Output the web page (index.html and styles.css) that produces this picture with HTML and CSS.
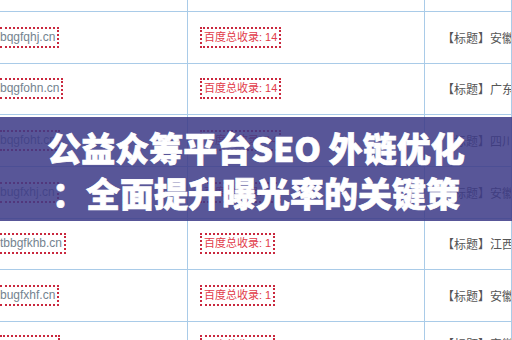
FILE: index.html
```html
<!DOCTYPE html>
<html lang="zh-CN">
<head>
<meta charset="utf-8">
<title>公益众筹平台SEO 外链优化</title>
<link rel="stylesheet" href="styles.css">
</head>
<body>
<div class="sheet">
  <div class="cell"></div><div class="cell"></div><div class="cell"></div>

  <div class="cell c1"><span class="dom">bqgfqhj.cn</span></div>
  <div class="cell c2"><span class="rec">百度总收录: 14</span></div>
  <div class="cell c3">【标题】安徽新能源汽车配件有限公司</div>

  <div class="cell c1"><span class="dom">bqgfohn.cn</span></div>
  <div class="cell c2"><span class="rec">百度总收录: 14</span></div>
  <div class="cell c3">【标题】广东汽车零部件有限公司</div>

  <div class="cell c1"><span class="dom">bqgfoht.cn</span></div>
  <div class="cell c2"><span class="rec">百度总收录: 14</span></div>
  <div class="cell c3">【标题】四川天府科技有限公司</div>

  <div class="cell c1"><span class="dom">bugfxhj.cn</span></div>
  <div class="cell c2"><span class="rec">百度总收录: 14</span></div>
  <div class="cell c3">【标题】安徽服饰贸易有限公司</div>

  <div class="cell c1"><span class="dom">tbbgfkhb.cn</span></div>
  <div class="cell c2"><span class="rec">百度总收录: 1</span></div>
  <div class="cell c3">【标题】江西铁路设备有限公司</div>

  <div class="cell c1"><span class="dom">bugfxhf.cn</span></div>
  <div class="cell c2"><span class="rec">百度总收录: 1</span></div>
  <div class="cell c3">【标题】安徽铁艺装饰有限公司</div>

  <div class="cell c1 last"><span class="dom">bqgfoht.cn</span></div>
  <div class="cell c2 last"><span class="rec">百度总收录: 1</span></div>
  <div class="cell c3 last">【标题】安徽建材有限公司</div>
</div>

<div class="banner">
  <h1 class="title"><span class="line">公益众筹平台SEO 外链优化</span><span class="line">：全面提升曝光率的关键策</span></h1>
</div>
</body>
</html>
```

FILE: styles.css
```css
html, body {
  margin: 0;
  padding: 0;
}

body {
  width: 512px;
  height: 340px;
  overflow: hidden;
  position: relative;
  background: #ffffff;
  font-family: "Liberation Sans", "Noto Sans CJK SC", sans-serif;
}

.sheet {
  display: grid;
  grid-template-columns: 188px 237px 1fr;
  grid-template-rows: 12px repeat(7, 51.667px);
  height: 340px;
  overflow: hidden;
}

.cell {
  border-right: 1px solid #a9cbe8;
  border-bottom: 1px solid #a9cbe8;
  display: flex;
  align-items: center;
  overflow: hidden;
  white-space: nowrap;
  min-width: 0;
}

.c1 {
  padding-left: 0;
}

.c2 {
  padding-left: 12px;
}

.c3 {
  padding-left: 17px;
  font-size: 12px;
  color: #555555;
  font-family: "Noto Sans CJK SC", sans-serif;
}

.last {
  align-items: flex-start;
  padding-top: 13px;
}

.dom {
  font-size: 12px;
  line-height: 17px;
  color: #74838f;
  border: 2px dotted #c9283e;
  border-left: none;
  padding-right: 2px;
}

.rec {
  font-size: 11px;
  line-height: 17px;
  color: #e23c4a;
  border: 2px dotted #c9283e;
  padding: 0 2px;
}

.banner {
  position: absolute;
  left: 0;
  top: 117px;
  width: 512px;
  height: 104px;
  box-sizing: border-box;
  padding: 8px 0 6px;
  background: rgba(60, 58, 135, 0.86);
}

.title {
  margin: 0;
  font-family: "Noto Sans CJK SC", sans-serif;
  font-weight: 900;
  font-size: 34px;
  line-height: 45px;
  color: #ffffff;
  -webkit-text-stroke: 0.7px #ffffff;
  text-align: center;
}

.line {
  display: block;
  white-space: nowrap;
}
```
